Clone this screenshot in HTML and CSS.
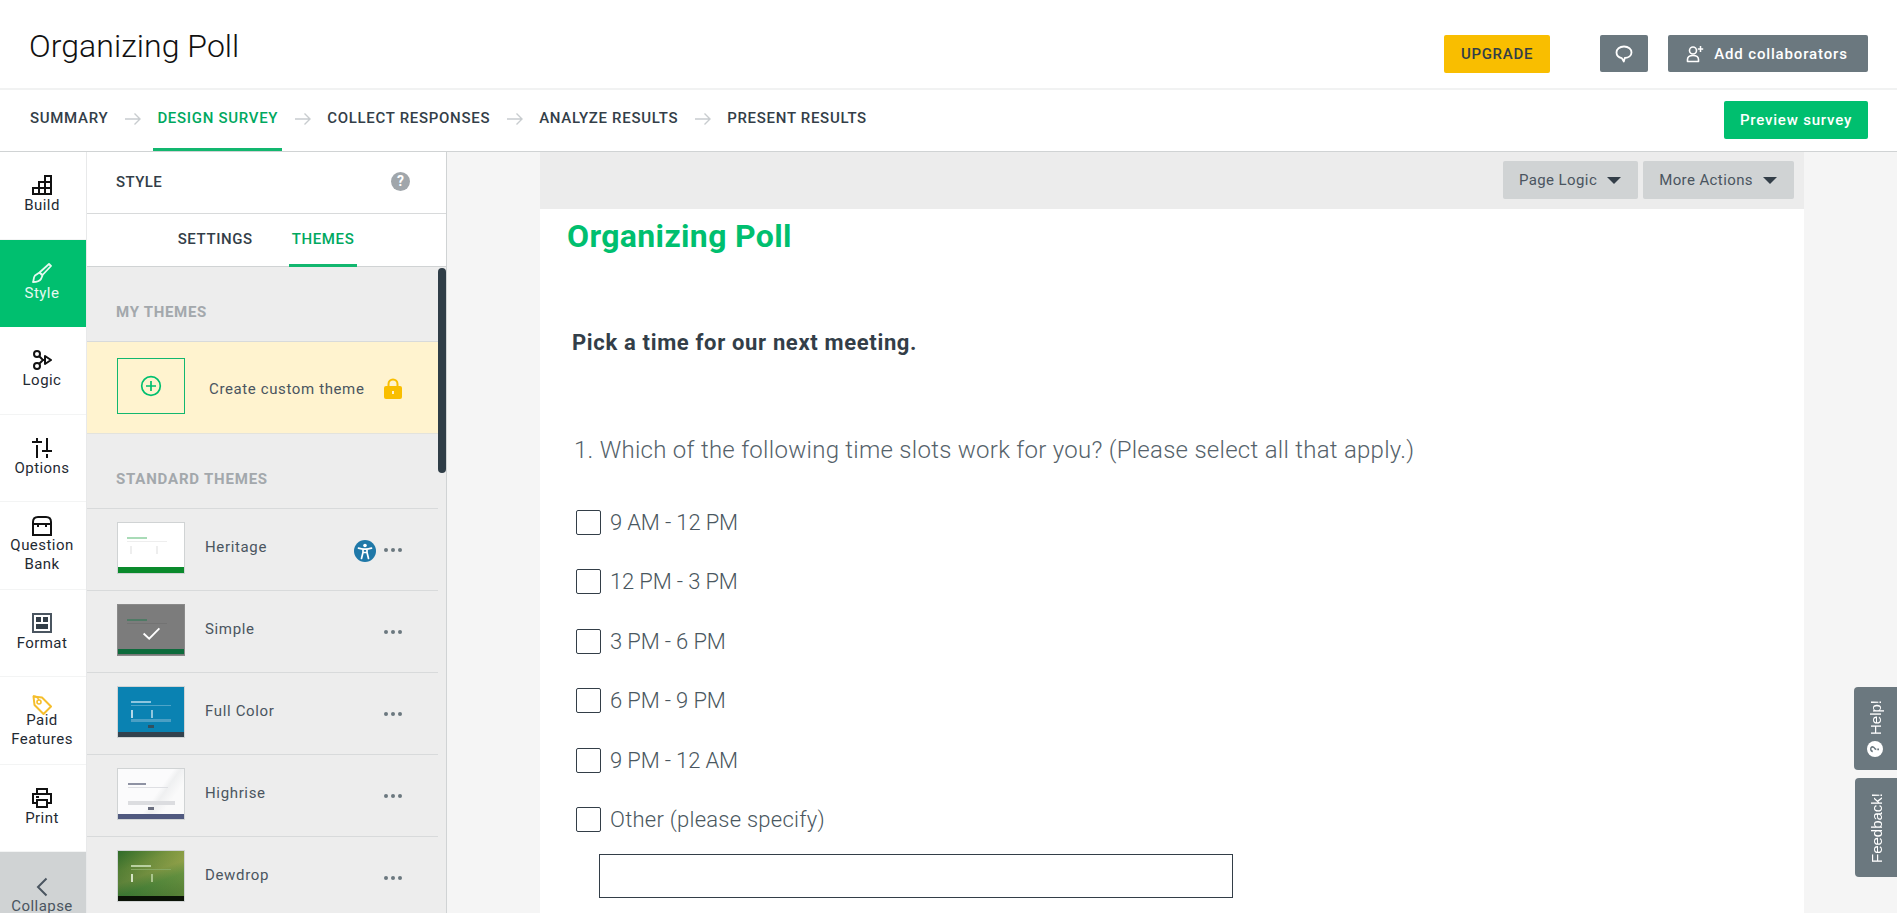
FILE: index.html
```html
<!DOCTYPE html>
<html lang="en">
<head>
<meta charset="utf-8">
<title>Organizing Poll</title>
<link rel="stylesheet" href="styles.css">
</head>
<body>
<div class="app">
  <header class="topbar">
    <h1 class="doc-title">Organizing Poll</h1>
    <div class="top-actions">
      <button class="btn btn-upgrade">UPGRADE</button>
      <button class="btn btn-grey btn-comment" aria-label="Comments">
        <svg viewBox="0 0 20 18" width="20" height="18"><path d="M10 1.500c-4.500 0-7.500 2.700-7.500 6 0 2.900 2.200 5 5.300 5.600l2 3.400 1-3.500c3.800-.3 6.700-2.500 6.700-5.500 0-3.300-3-6-7.500-6z" fill="none" stroke="#fff" stroke-width="1.800" stroke-linejoin="round"/></svg>
      </button>
      <button class="btn btn-grey btn-collab">
        <svg viewBox="0 0 20 20" width="20" height="20"><circle cx="8" cy="6.500" r="3.500" fill="none" stroke="#fff" stroke-width="1.600"/><path d="M2.500 17.500v-2c0-2.500 2-4 5.500-4s5.500 1.500 5.500 4v2z" fill="none" stroke="#fff" stroke-width="1.600" stroke-linejoin="round"/><path d="M15.500 2v6M12.800 5h5.400" stroke="#fff" stroke-width="1.500"/></svg>
        Add collaborators
      </button>
    </div>
  </header>

  <nav class="steps">
    <a class="step">SUMMARY</a><span class="arrow"><svg viewBox="0 0 18 14" width="18" height="14"><path d="M1 7h15M10.500 1.500 16 7l-5.500 5.500" fill="none" stroke="#c8cccf" stroke-width="1.400"/></svg></span>
    <a class="step step-active">DESIGN SURVEY</a><span class="arrow"><svg viewBox="0 0 18 14" width="18" height="14"><path d="M1 7h15M10.500 1.500 16 7l-5.500 5.500" fill="none" stroke="#c8cccf" stroke-width="1.400"/></svg></span>
    <a class="step">COLLECT RESPONSES</a><span class="arrow"><svg viewBox="0 0 18 14" width="18" height="14"><path d="M1 7h15M10.500 1.500 16 7l-5.500 5.500" fill="none" stroke="#c8cccf" stroke-width="1.400"/></svg></span>
    <a class="step">ANALYZE RESULTS</a><span class="arrow"><svg viewBox="0 0 18 14" width="18" height="14"><path d="M1 7h15M10.500 1.500 16 7l-5.500 5.500" fill="none" stroke="#c8cccf" stroke-width="1.400"/></svg></span>
    <a class="step">PRESENT RESULTS</a>
    <button class="btn btn-preview">Preview survey</button>
  </nav>

  <div class="workspace">
    <aside class="rail">
      <a class="rail-item">
        <svg viewBox="0 0 20 20" width="20" height="20"><path d="M13 1h6v18H1v-6h6V7h6zM7 7h12M1 13h18M13 1v18M7 7v12" fill="none" stroke="#111" stroke-width="2"/></svg>
        <span>Build</span>
      </a>
      <a class="rail-item rail-active">
        <svg viewBox="0 0 20 20" width="20" height="20"><path d="M17 1l2 2-8.500 9-3-2.500zM7.500 9.500l3 3-1.500 3.500c-1.500 2.500-4.500 3-8 3 1-1 0-4 2-6.500z" fill="none" stroke="#e6f9f0" stroke-width="1.800" stroke-linejoin="round"/></svg>
        <span>Style</span>
      </a>
      <a class="rail-item">
        <svg viewBox="0 0 20 20" width="20" height="20"><circle cx="5" cy="4" r="3" fill="none" stroke="#111" stroke-width="2"/><circle cx="5" cy="16" r="3" fill="none" stroke="#111" stroke-width="2"/><path d="M7 6l4 4-4 4M11 10h2" fill="none" stroke="#111" stroke-width="2"/><path d="M13 6l6 4-6 4z" fill="none" stroke="#111" stroke-width="2" stroke-linejoin="round"/></svg>
        <span>Logic</span>
      </a>
      <a class="rail-item">
        <svg viewBox="0 0 20 20" width="20" height="20"><path d="M5 0v3M0 4h10M5 7v13M15 0v12M10 13h10M15 16v4" fill="none" stroke="#111" stroke-width="2"/></svg>
        <span>Options</span>
      </a>
      <a class="rail-item rail-two">
        <svg viewBox="0 0 20 20" width="20" height="20"><path d="M1 8V6c0-3 2-5 5-5h8c3 0 5 2 5 5v13H1zM1 8h18" fill="none" stroke="#111" stroke-width="2"/><path d="M6 8v3M14 8v3" stroke="#111" stroke-width="2"/></svg>
        <span>Question<br>Bank</span>
      </a>
      <a class="rail-item">
        <svg viewBox="0 0 20 20" width="20" height="20"><rect x="1" y="1" width="18" height="18" fill="none" stroke="#4a5560" stroke-width="2"/><rect x="4" y="4" width="5" height="5" fill="#333e48"/><rect x="11" y="4" width="5" height="5" fill="#333e48"/><rect x="4" y="11" width="12" height="5" fill="#333e48"/></svg>
        <span>Format</span>
      </a>
      <a class="rail-item rail-paid">
        <svg viewBox="0 0 20 20" width="20" height="20"><path d="M1.500 1.500l8.500 1 9 9-7.500 7.500-9-9z" fill="none" stroke="#f5be2c" stroke-width="2" stroke-linejoin="round"/><circle cx="7" cy="7" r="2" fill="none" stroke="#f5be2c" stroke-width="1.600"/><path d="M7 5C6 3 4 1 1 1" fill="none" stroke="#f5be2c" stroke-width="1.400"/></svg>
        <span>Paid<br>Features</span>
      </a>
      <a class="rail-item">
        <svg viewBox="0 0 20 20" width="20" height="20"><path d="M5 6V1h10v5M5 15H1V6h18v9h-4" fill="none" stroke="#111" stroke-width="2"/><rect x="5" y="12" width="10" height="7" fill="none" stroke="#111" stroke-width="2"/><path d="M4 9h3" stroke="#111" stroke-width="2"/></svg>
        <span>Print</span>
      </a>
      <a class="rail-item rail-collapse">
        <svg viewBox="0 0 12 20" width="12" height="20"><path d="M10.500 1.500 2 10l8.500 8.500" fill="none" stroke="#4a5560" stroke-width="2"/></svg>
        <span>Collapse</span>
      </a>
    </aside>

    <section class="panel">
      <div class="panel-head">
        <span class="panel-title">STYLE</span>
        <span class="help-dot">?</span>
      </div>
      <div class="panel-tabs">
        <a class="tab">SETTINGS</a>
        <a class="tab tab-active">THEMES</a>
      </div>
      <div class="panel-body">
        <div class="scroll-thumb"></div>
        <h2 class="group-title group-my">MY THEMES</h2>
        <div class="custom-theme">
          <div class="add-box">
            <svg viewBox="0 0 22 22" width="22" height="22"><circle cx="11" cy="11" r="9.300" fill="none" stroke="#00bf6f" stroke-width="1.700"/><path d="M11 6v10M6 11h10" stroke="#00bf6f" stroke-width="1.700"/></svg>
          </div>
          <span class="custom-label">Create custom theme</span>
          <svg class="lock" viewBox="0 0 18 21" width="18" height="21"><path d="M4.500 9V6a4.500 4.500 0 0 1 9 0v3" fill="none" stroke="#f9be00" stroke-width="2"/><rect x="0" y="8" width="18" height="13" rx="2" fill="#f9be00"/><rect x="8" y="13" width="2" height="3" fill="#fff3cf"/></svg>
        </div>
        <h2 class="group-title group-std">STANDARD THEMES</h2>

        <div class="theme">
          <div class="thumb thumb-heritage">
            <i class="t-head"></i><i class="t-line"></i><i class="t-opts"></i>
            <i class="t-foot"></i>
          </div>
          <span class="theme-name">Heritage</span>
          <svg class="a11y" viewBox="0 0 22 22" width="22" height="22"><circle cx="11" cy="11" r="11" fill="#1f78a8"/><circle cx="11" cy="5.500" r="1.800" fill="#fff"/><path d="M4.500 8.200l4.500 1v3.300l-1.500 6M17.500 8.200l-4.500 1v3.300l1.500 6M9 9.200h4M9.200 12.500h3.600" fill="none" stroke="#fff" stroke-width="1.700" stroke-linecap="round"/></svg>
          <span class="dots"><i></i><i></i><i></i></span>
        </div>

        <div class="theme">
          <div class="thumb thumb-simple">
            <i class="t-head"></i><i class="t-line"></i>
            <i class="t-foot"></i>
            <svg class="t-check" viewBox="0 0 20 14" width="19" height="13"><path d="M1.500 7l6 5.500L18.500 1.500" fill="none" stroke="#fff" stroke-width="2"/></svg>
          </div>
          <span class="theme-name">Simple</span>
          <span class="dots"><i></i><i></i><i></i></span>
        </div>

        <div class="theme">
          <div class="thumb thumb-color">
            <i class="t-head"></i><i class="t-line"></i><i class="t-opts"></i><i class="t-input"></i><i class="t-btn"></i>
            <i class="t-foot"></i>
          </div>
          <span class="theme-name">Full Color</span>
          <span class="dots"><i></i><i></i><i></i></span>
        </div>

        <div class="theme">
          <div class="thumb thumb-highrise">
            <i class="t-head"></i><i class="t-line"></i><i class="t-input"></i><i class="t-btn"></i>
            <i class="t-foot"></i>
          </div>
          <span class="theme-name">Highrise</span>
          <span class="dots"><i></i><i></i><i></i></span>
        </div>

        <div class="theme">
          <div class="thumb thumb-dewdrop">
            <i class="t-head"></i><i class="t-line"></i><i class="t-opts"></i>
            <i class="t-foot"></i>
          </div>
          <span class="theme-name">Dewdrop</span>
          <span class="dots"><i></i><i></i><i></i></span>
        </div>
      </div>
    </section>

    <main class="canvas">
      <div class="sheet">
        <div class="toolbar">
          <button class="tool-btn">Page Logic<i class="caret"></i></button>
          <button class="tool-btn">More Actions<i class="caret"></i></button>
        </div>
        <div class="survey">
          <h2 class="survey-title">Organizing Poll</h2>
          <p class="page-title">Pick a time for our next meeting.</p>
          <p class="question">1. Which of the following time slots work for you? (Please select all that apply.)</p>
          <ul class="answers">
            <li class="answer"><span class="check"></span>9 AM - 12 PM</li>
            <li class="answer"><span class="check"></span>12 PM - 3 PM</li>
            <li class="answer"><span class="check"></span>3 PM - 6 PM</li>
            <li class="answer"><span class="check"></span>6 PM - 9 PM</li>
            <li class="answer"><span class="check"></span>9 PM - 12 AM</li>
            <li class="answer answer-other"><span class="check"></span>Other (please specify)</li>
          </ul>
          <div class="other-input"></div>
        </div>
      </div>
    </main>
  </div>

  <a class="side-tab side-help"><span class="help-q">?</span>Help!</a>
  <a class="side-tab side-feedback">Feedback!</a>
</div>
</body>
</html>
```
FILE: styles.css
```css
* { box-sizing: border-box; }
html, body { margin: 0; height: 100%; background: #fff; }
body { font-family: "Noto Sans", "Open Sans", sans-serif; color: #333e48; overflow: hidden; }
h1, h2, p, ul { margin: 0; padding: 0; font-weight: normal; }
button { font-family: inherit; border: 0; cursor: pointer; }
a { display: block; }
i { display: block; font-style: normal; }

.app { position: relative; width: 1900px; height: 913px; padding-right: 3px; display: flex; flex-direction: column; overflow: hidden; }

.topbar { height: 90px; flex: none; padding: 0 29px; display: flex; align-items: flex-start; justify-content: space-between; border-bottom: 2px solid #f1f2f2; }
.doc-title { font-family: "Roboto", sans-serif; font-weight: 300; font-size: 32px; line-height: 38px; color: #111; margin-top: 27px; letter-spacing: .05px; }
.top-actions { display: flex; margin-top: 35px; }
.btn { border-radius: 2px; font-family: "Roboto", sans-serif; font-weight: 500; font-size: 15px; display: flex; align-items: center; justify-content: center; }
.btn-upgrade { width: 106px; height: 38px; background: #f9be00; color: #333e48; letter-spacing: .7px; margin-right: 50px; }
.btn-grey { height: 37px; background: #6b787f; color: #fff; }
.btn-comment { width: 48px; margin-right: 20px; }
.btn-collab { width: 200px; gap: 9px; letter-spacing: .85px; padding: 0 3px 0 0; }

.steps { height: 62px; flex: none; padding: 0 29px; display: flex; align-items: stretch; border-bottom: 1px solid #d0d3d4; }
.step { font-family: "Roboto", sans-serif; font-weight: 500; font-size: 15px; letter-spacing: .7px; line-height: 57px; color: #333e48; position: relative; padding: 0 1px; white-space: nowrap; }
.step-active { color: #00a85f; }
.step-active::after { content: ""; position: absolute; left: -3px; right: -3px; bottom: 0; height: 3px; background: #12b76f; }
.arrow { display: flex; align-items: center; width: 47px; justify-content: center; padding-bottom: 4px; }
.btn-preview { margin: 11px 0 12px auto; width: 144px; height: 38px; background: #00bf6f; color: #fff; letter-spacing: .8px; }

.workspace { flex: 1; display: flex; min-height: 0; }

.rail { width: 87px; flex: none; display: flex; flex-direction: column; border-right: 1px solid #e8e9ea; }
.rail-item { height: 87.500px; flex: none; padding: 23px 2px 0 0; display: flex; flex-direction: column; align-items: center; border-bottom: 1px solid #f3f4f4; color: #1f2a33; text-align: center; }
.rail-item span { font-family: "Roboto", sans-serif; font-size: 15px; line-height: 19px; letter-spacing: .45px; margin-top: 1px; }
.rail-two { padding-top: 14px; }
.rail-two span { margin-top: 0; }
.rail-paid { padding-top: 18px; }
.rail-paid span { margin-top: -4px; }
.rail-active { background: #00bf6f; color: #e6f9f0; border-bottom: 0; }
.rail-collapse { background: #d0d3d4; color: #4a5560; flex: 1; border: 0; padding-top: 25px; }
.rail-collapse span { margin-top: 0; }

.panel { width: 360px; flex: none; position: relative; display: flex; flex-direction: column; border-right: 1px solid #d0d3d4; }
.panel-head { height: 62px; flex: none; display: flex; align-items: center; justify-content: space-between; padding: 0 36px 2px 29px; border-bottom: 1px solid #d8dadb; }
.panel-title { font-family: "Roboto", sans-serif; font-weight: 500; font-size: 15px; letter-spacing: .4px; }
.help-dot { width: 19px; height: 19px; border-radius: 50%; background: #a0a6ab; color: #fff; font-family: "Roboto", sans-serif; font-weight: 700; font-size: 14px; line-height: 19px; text-align: center; }
.panel-tabs { height: 53px; flex: none; display: flex; justify-content: center; gap: 35px; border-bottom: 1px solid #d0d3d4; padding-right: 1px; }
.tab { font-family: "Roboto", sans-serif; font-weight: 500; font-size: 15px; letter-spacing: .6px; line-height: 50px; position: relative; padding: 0 2px; }
.tab-active { color: #00a85f; }
.tab-active::after { content: ""; position: absolute; left: -1px; right: -1px; bottom: -1px; height: 3px; background: #12b76f; }

.panel-body { flex: 1; background: #ededed; position: relative; overflow: hidden; padding-right: 8px; }
.scroll-thumb { position: absolute; top: 1px; right: 0; width: 8px; height: 205px; border-radius: 4px; background: #2f3d47; }
.group-title { font-family: "Roboto", sans-serif; font-weight: 700; font-size: 15px; color: #a3a8ac; padding-left: 29px; }
.group-my { height: 75px; line-height: 91px; letter-spacing: .7px; border-bottom: 1px solid #d8dadb; }
.group-std { height: 75px; line-height: 90px; letter-spacing: .8px; border-bottom: 1px solid #d8dadb; }
.custom-theme { height: 92px; background: #fff3cf; display: flex; align-items: center; padding-left: 30px; border-bottom: 1px solid #e3e3dd; position: relative; }
.add-box { width: 68px; height: 56px; border: 1px solid #12b76f; display: flex; align-items: center; justify-content: center; margin-top: -3px; }
.custom-label { font-family: "Roboto", sans-serif; font-size: 15px; letter-spacing: .62px; margin-left: 24px; margin-top: 3px; color: #4a5560; white-space: nowrap; }
.lock { margin-left: 20px; margin-top: 1px; }

.theme { height: 82px; display: flex; align-items: flex-start; padding: 13px 0 0 30px; border-bottom: 1px solid #d8dadb; position: relative; }
.thumb { width: 68px; height: 52px; flex: none; border: 1px solid #d0d3d4; position: relative; overflow: hidden; }
.theme-name { font-family: "Roboto", sans-serif; font-size: 15px; letter-spacing: .65px; color: #4a5560; margin-left: 20px; margin-top: 16px; }
.a11y { position: absolute; left: 267px; top: 31px; }
.dots { position: absolute; left: 297px; top: 39px; display: flex; gap: 3px; }
.dots i { width: 4px; height: 4px; border-radius: 50%; background: #6b787f; }

.t-head { position: absolute; left: 13px; top: 14px; width: 20px; height: 2px; filter: blur(.4px); }
.t-line { position: absolute; left: 13px; top: 18px; width: 40px; height: 1px; filter: blur(.4px); }
.t-opts { position: absolute; left: 13px; top: 23px; width: 2px; height: 8px; filter: blur(.4px); }
.t-input { position: absolute; left: 13px; top: 32px; width: 40px; height: 3px; filter: blur(.4px); }
.t-btn { position: absolute; left: 30px; top: 38px; width: 6px; height: 3px; filter: blur(.3px); }
.t-foot { position: absolute; left: 0; right: 0; bottom: 0; height: 6px; }
.t-check { position: absolute; left: 24px; top: 22px; }

.thumb-heritage { background: #fff; }
.thumb-heritage .t-head { background: #a9dbb7; left: 9px; }
.thumb-heritage .t-line { background: #eeeeee; left: 9px; }
.thumb-heritage .t-opts { background: #eeeeee; left: 12px; box-shadow: 26px 0 0 #eeeeee; }
.thumb-heritage .t-foot { background: #0a8a2c; }

.thumb-simple { background: #7c7c7c; border-color: #8a8a8a; }
.thumb-simple .t-head { background: #4f7a65; left: 9px; }
.thumb-simple .t-line { background: #737373; left: 9px; }
.thumb-simple .t-foot { background: #0d6b3c; border-bottom: 1px solid #777; }

.thumb-color { background: #0a82b2; }
.thumb-color .t-head { background: #8ec6df; }
.thumb-color .t-line { background: #4ea4c8; }
.thumb-color .t-opts { background: #b5d9e9; box-shadow: 20px 0 0 #8fc6dd; }
.thumb-color .t-input { background: #4a9fc4; }
.thumb-color .t-btn { background: #33505f; }
.thumb-color .t-foot { background: #33424e; height: 5px; }

.thumb-highrise { background: linear-gradient(125deg, #fbfbfc 55%, #eff0f1 62%, #fafafa 75%); }
.thumb-highrise .t-head { background: #8e92a3; left: 10px; width: 18px; }
.thumb-highrise .t-line { background: #dedfe3; left: 10px; }
.thumb-highrise .t-input { background: #dcdde0; height: 4px; left: 10px; width: 47px; }
.thumb-highrise .t-btn { background: #6b6f80; }
.thumb-highrise .t-foot { background: #50597f; height: 5px; }

.thumb-dewdrop { background: linear-gradient(90deg, rgba(30,90,35,.45), rgba(150,160,70,.35)), linear-gradient(160deg, #3d7a2f 0%, #7f9b42 28%, #8ca04a 45%, #4d8a3d 62%, #3a7430 85%); }
.thumb-dewdrop .t-head { background: #b9d0a0; }
.thumb-dewdrop .t-line { background: #86a862; }
.thumb-dewdrop .t-opts { background: #d5e3c4; box-shadow: 20px 0 0 #a9c48c; }
.thumb-dewdrop .t-foot { background: #0a1206; height: 5px; }

.canvas { flex: 1; min-width: 0; background: #f5f5f5; padding: 0 93px; }
.sheet { height: 100%; background: #fff; }
.toolbar { height: 57px; background: #ececec; display: flex; justify-content: flex-end; gap: 5px; padding: 9px 10px 0 0; }
.tool-btn { height: 38px; padding: 0 17px 0 16px; border-radius: 2px; background: #d0d3d4; color: #4a5560; font-family: "Roboto", sans-serif; font-size: 15px; letter-spacing: .4px; display: flex; align-items: center; gap: 10px; }
.caret { width: 0; height: 0; border-left: 7px solid transparent; border-right: 7px solid transparent; border-top: 7px solid #333e48; }

.survey { padding: 6px 0 0 27px; }
.survey-title { font-family: "Roboto", sans-serif; font-weight: 700; font-size: 32px; line-height: 42px; color: #00bf6f; letter-spacing: .35px; }
.page-title { font-family: "Roboto", sans-serif; font-weight: 700; font-size: 22px; line-height: 30px; color: #333e48; margin: 71px 0 0 5px; letter-spacing: .66px; }
.question { font-family: "Roboto", sans-serif; font-weight: 300; font-size: 24px; line-height: 34px; color: #55626a; margin: 75px 0 0 7px; letter-spacing: .27px; white-space: nowrap; }
.answers { list-style: none; margin: 43px 0 0 9px; }
.answer { height: 59.400px; display: flex; align-items: flex-start; font-family: "Roboto", sans-serif; font-weight: 300; font-size: 22px; line-height: 26px; color: #4a5760; letter-spacing: -.15px; }
.answer-other { letter-spacing: .25px; }
.check { width: 25px; height: 25px; flex: none; border: 1px solid #333e48; border-radius: 2px; margin-right: 9px; }
.other-input { width: 634px; height: 44px; border: 1px solid #333e48; margin: -12px 0 0 32px; }

.side-tab { position: absolute; right: 3px; background: #6b787f; color: #fff; font-family: "Liberation Sans", sans-serif; font-size: 15px; writing-mode: vertical-rl; transform: rotate(180deg); display: flex; align-items: center; justify-content: center; border-radius: 0 4px 4px 0; }
.side-help { top: 687px; width: 43px; height: 83px; gap: 6px; padding-top: 1px; }
.side-feedback { top: 778px; width: 42px; height: 99px; }
.help-q { width: 16px; height: 16px; background: #fff; color: #6b787f; border-radius: 50%; font-size: 12px; font-weight: 700; line-height: 16px; text-align: center; transform: rotate(90deg); writing-mode: horizontal-tb; }
```
